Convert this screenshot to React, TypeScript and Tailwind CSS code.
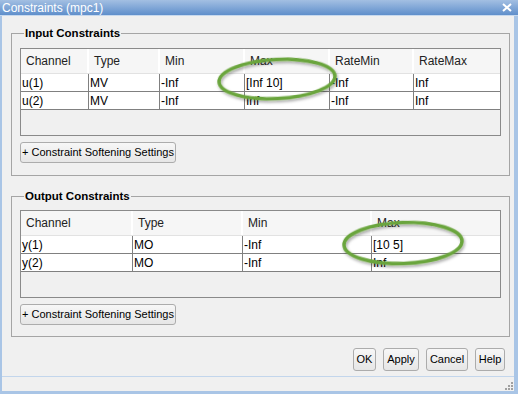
const sans = "font-['Liberation_Sans',Arial,sans-serif]";

type Table = {
  cols: string;
  headers: string[];
  rows: string[][];
};

const inputTable: Table = {
  cols: "grid-cols-[68px_71px_85px_85px_84px_86px]",
  headers: ["Channel", "Type", "Min", "Max", "RateMin", "RateMax"],
  rows: [
    ["u(1)", "MV", "-Inf", "[Inf 10]", "-Inf", "Inf"],
    ["u(2)", "MV", "-Inf", "Inf", "-Inf", "Inf"],
  ],
};

const outputTable: Table = {
  cols: "grid-cols-[112px_110px_129px_128px]",
  headers: ["Channel", "Type", "Min", "Max"],
  rows: [
    ["y(1)", "MO", "-Inf", "[10 5]"],
    ["y(2)", "MO", "-Inf", "Inf"],
  ],
};

function Btn({ label, className = "" }: { label: string; className?: string }) {
  return (
    <button
      className={`flex items-center justify-center rounded-[3px] border border-[#acacac] bg-linear-to-b from-[#f7f7f7] to-[#e6e6e6] text-[11px] text-black ${className}`}
    >
      {label}
    </button>
  );
}

function Grid({ t }: { t: Table }) {
  return (
    <div className="flex h-[88px] w-[481px] flex-col border border-[#8a8a8a] bg-[#f0f0f0]">
      <div className={`grid h-[25px] ${t.cols} border-b border-[#e2e2e2] bg-[#f6f6f6]`}>
        {t.headers.map((h, i) => (
          <div
            key={h}
            className={`flex items-center pl-[5px] text-[12px] text-[#222] ${
              i < t.headers.length - 1 ? "border-r-2 border-white" : ""
            }`}
          >
            {h}
          </div>
        ))}
      </div>
      {t.rows.map((r, ri) => (
        <div key={ri} className={`grid h-[18px] ${t.cols} border-b border-[#808080] bg-white`}>
          {r.map((c, i) => (
            <div
              key={i}
              className={`flex items-center pl-[1px] text-[12px] leading-none text-black ${
                i < r.length - 1 ? "border-r border-[#808080]" : ""
              }`}
            >
              {c}
            </div>
          ))}
        </div>
      ))}
    </div>
  );
}

function Group({
  title,
  t,
  className = "",
  pt,
  pb,
}: {
  title: string;
  t: Table;
  className?: string;
  pt: string;
  pb: string;
}) {
  return (
    <fieldset className={`w-[499px] border border-[#a5a5a5] px-[8px] ${pt} ${pb} ${className}`}>
      <legend className="ml-[4px] px-[1px] text-[11.5px] leading-[14px] font-bold text-black">
        {title}
      </legend>
      <Grid t={t} />
      <Btn label="+ Constraint Softening Settings" className="mt-[6px] h-[21px] w-[156px]" />
    </fieldset>
  );
}

export default function App() {
  return (
    <div className={`relative h-[394px] w-[518px] overflow-hidden bg-[#f0f0f0] ${sans}`}>
      {/* title bar */}
      <div className="flex h-[16px] items-center justify-between border-b border-[#c7d9ee] bg-linear-to-b from-[#a3bfe2] to-[#5f8fcb] pl-[2px] pr-[6px]">
        <span className="text-[12px] leading-none text-white">Constraints (mpc1)</span>
        <svg width="10" height="9" viewBox="0 0 10 9">
          <path d="M1 1 L9 8 M9 1 L1 8" stroke="white" strokeWidth="2" />
        </svg>
      </div>

      <div className="flex h-[378px] flex-col border-x-0 border-b-[3px] border-l-2 border-r-4 border-[#a9c5e6]">
        <div className="flex flex-1 flex-col pl-[9px] pr-[4px]">
          <Group title="Input Constraints" t={inputTable} className="mt-[10px]" pt="pt-[8px]" pb="pb-[12px]" />
          <Group title="Output Constraints" t={outputTable} className="mt-[13px]" pt="pt-[7px]" pb="pb-[11px]" />

          <div className="mt-[11px] flex justify-end gap-[7px] pr-[5px]">
            <Btn label="OK" className="h-[23px] w-[23px]" />
            <Btn label="Apply" className="h-[23px] w-[36px]" />
            <Btn label="Cancel" className="h-[23px] w-[42px]" />
            <Btn label="Help" className="h-[23px] w-[30px]" />
          </div>
        </div>

        {/* status bar */}
        <div className="flex h-[15px] items-end justify-end border-t border-[#c3d6ec] pb-[1px] pr-[1px]">
          <svg width="9" height="9" viewBox="0 0 9 9" fill="#a0a0a0">
            <rect x="7" y="1" width="2" height="2" />
            <rect x="4" y="4" width="2" height="2" />
            <rect x="7" y="4" width="2" height="2" />
            <rect x="1" y="7" width="2" height="2" />
            <rect x="4" y="7" width="2" height="2" />
            <rect x="7" y="7" width="2" height="2" />
          </svg>
        </div>
      </div>

      {/* highlight ellipses */}
      <svg className="pointer-events-none absolute inset-0" width="518" height="394" viewBox="0 0 518 394">
        <defs>
          <filter id="sh" x="-20%" y="-50%" width="140%" height="200%">
            <feDropShadow dx="1" dy="2" stdDeviation="1.5" floodColor="#000" floodOpacity="0.35" />
          </filter>
        </defs>
        <ellipse cx="277" cy="79" rx="58" ry="19.5" fill="none" stroke="#6aa53c" strokeWidth="3.5" filter="url(#sh)" transform="rotate(-3 277 79)" />
        <ellipse cx="403" cy="243" rx="59" ry="20.5" fill="none" stroke="#6aa53c" strokeWidth="3.5" filter="url(#sh)" transform="rotate(-2 403 243)" />
      </svg>
    </div>
  );
}
